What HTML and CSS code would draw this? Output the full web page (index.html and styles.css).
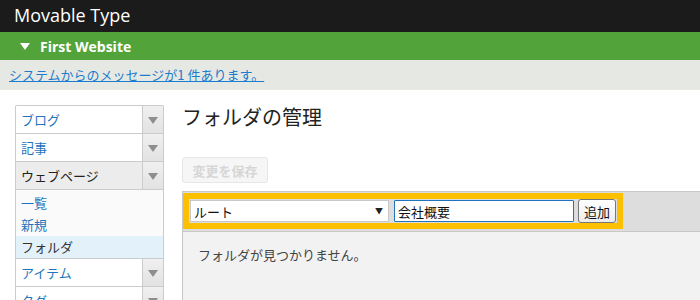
FILE: index.html
```html
<!DOCTYPE html>
<html lang="ja">

<head>
    <meta charset="UTF-8">
    <title>フォルダの管理 | Movable Type</title>
    <link rel="stylesheet" href="styles.css">
</head>

<body>
    <div class="brand">Movable Type</div>
    <div class="site-bar"><span class="site-toggle"></span>First Website</div>
    <div class="msg-bar"><a href="#">システムからのメッセージが1 件あります。</a></div>

    <div class="layout">
        <ul class="side-menu">
            <li class="menu-item"><a href="#">ブログ</a><span class="arrow"></span></li>
            <li class="menu-item"><a href="#">記事</a><span class="arrow"></span></li>
            <li class="menu-item open"><a href="#">ウェブページ</a><span class="arrow"></span></li>
            <li class="sub-menu">
                <a href="#">一覧</a>
                <a href="#">新規</a>
                <a href="#" class="current">フォルダ</a>
            </li>
            <li class="menu-item"><a href="#">アイテム</a><span class="arrow"></span></li>
            <li class="menu-item"><a href="#">タグ</a><span class="arrow"></span></li>
        </ul>

        <div class="main">
            <h1 class="page-title">フォルダの管理</h1>
            <button class="save-btn" disabled>変更を保存</button>
            <div class="panel">
                <div class="toolbar">
                    <div class="highlight">
                        <span class="select-wrap">
                            <select class="parent-select">
                                <option>ルート</option>
                            </select>
                        </span>
                        <input class="name-input" type="text" value="会社概要">
                        <button class="add-btn">追加</button>
                    </div>
                </div>
                <div class="panel-body">フォルダが見つかりません。</div>
            </div>
        </div>
    </div>
</body>

</html>
```

FILE: styles.css
```css
body {
    margin: 0;
    padding: 0;
    font-family: "Noto Sans CJK JP", "Noto Sans", sans-serif;
    font-size: 13px;
    color: #333;
    background: #fff;
    overflow: hidden;
}

a {
    text-decoration: none;
}

.brand {
    height: 32px;
    line-height: 31px;
    padding-left: 14px;
    background: #1b1b1b;
    color: #fff;
    font-family: "Open Sans", "Noto Sans", sans-serif;
    font-size: 18px;
}

.site-bar {
    display: flex;
    align-items: center;
    height: 28px;
    padding-left: 20px;
    background: #52a43a;
    color: #fff;
    font-family: "Open Sans", "Noto Sans", sans-serif;
    font-size: 14px;
    font-weight: bold;
}

.site-toggle {
    width: 0;
    height: 0;
    margin-right: 10px;
    border-left: 5px solid transparent;
    border-right: 5px solid transparent;
    border-top: 7px solid #fff;
}

.msg-bar {
    height: 30px;
    line-height: 30px;
    padding-left: 9px;
    background: #e6e8e3;
}

.msg-bar a {
    color: #1c7ccd;
    text-decoration: underline;
    font-size: 13px;
}

.layout {
    display: flex;
    padding: 15px 0 0 15px;
}

/* 左メニュー */
.side-menu {
    width: 147px;
    margin: 0;
    padding: 0;
    list-style: none;
    border: 1px solid #c9cbcd;
    border-bottom: none;
    border-radius: 2px 2px 0 0;
    flex-shrink: 0;
}

.menu-item {
    display: flex;
    height: 27px;
    border-bottom: 1px solid #c9cbcd;
    background: #fff;
}

.menu-item a {
    flex: 1;
    line-height: 27px;
    padding-left: 5px;
    color: #1f74bd;
    font-size: 13px;
}

.menu-item.open {
    background: #ececec;
}

.menu-item.open a {
    color: #222;
}

.arrow {
    position: relative;
    width: 20px;
    border-left: 1px solid #c9cbcd;
    background: linear-gradient(#f0f0f0, #e2e2e2);
}

.arrow::after {
    content: "";
    position: absolute;
    left: 5px;
    top: 11px;
    border-left: 5px solid transparent;
    border-right: 5px solid transparent;
    border-top: 7px solid #8e8e8e;
}

.sub-menu {
    display: flex;
    flex-direction: column;
    padding-top: 2px;
    background: #fafafa;
    border-bottom: 1px solid #c9cbcd;
}

.sub-menu a {
    height: 22px;
    line-height: 22px;
    padding-left: 5px;
    color: #1f74bd;
    font-size: 13px;
}

.sub-menu a.current {
    height: 22px;
    background: #e2f1fa;
    color: #333;
}

/* メイン */
.main {
    flex: 1;
    margin-left: 18px;
}

.page-title {
    margin: 0;
    height: 28px;
    line-height: 24px;
    font-size: 20px;
    font-weight: normal;
    color: #222;
}

.save-btn {
    display: block;
    margin: 24px 0 0 0;
    width: 86px;
    height: 26px;
    padding: 0;
    border: 1px solid #e6e6e6;
    border-radius: 3px;
    background: #f6f6f6;
    color: #d6d6d6;
    font-family: inherit;
    font-size: 13px;
    font-weight: bold;
}

.panel {
    margin-top: 8px;
    border-left: 1px solid #c8c8c8;
    border-top: 1px solid #c8c8c8;
    background: #f2f2f2;
    height: 120px;
}

.toolbar {
    height: 40px;
    padding: 1px 0 0 0;
    box-sizing: border-box;
    background: #dcdddc;
    border-bottom: 1px solid #c8c8c8;
}

.highlight {
    display: inline-flex;
    align-items: center;
    height: 36px;
    padding: 0 1px;
    box-sizing: border-box;
    border: 6px solid #fcc000;
    background: #dcdddc;
}

.select-wrap {
    position: relative;
    display: inline-block;
    margin-right: 5px;
}

.select-wrap::after {
    content: "▼";
    position: absolute;
    right: 6px;
    top: 5px;
    font-size: 8px;
    color: #222;
}

.parent-select {
    appearance: none;
    -webkit-appearance: none;
    display: block;
    width: 199px;
    height: 22px;
    padding: 0 0 0 3px;
    border: 1px solid #c8c8c8;
    border-radius: 0;
    background: #fff;
    color: #111;
    font-family: inherit;
    font-size: 13px;
}

.name-input {
    width: 180px;
    height: 22px;
    margin-right: 4px;
    padding: 0 3px;
    box-sizing: border-box;
    border: 1px solid #1f74bd;
    border-radius: 1px;
    color: #111;
    font-family: inherit;
    font-size: 13px;
    outline: none;
}

.add-btn {
    height: 24px;
    width: 38px;
    padding: 0;
    border: 1px solid #777;
    border-radius: 3px;
    background: linear-gradient(#fff, #ececec);
    color: #111;
    font-family: inherit;
    font-size: 13px;
}

.panel-body {
    padding: 13px 0 0 15px;
    color: #444;
    font-size: 13px;
}
```
